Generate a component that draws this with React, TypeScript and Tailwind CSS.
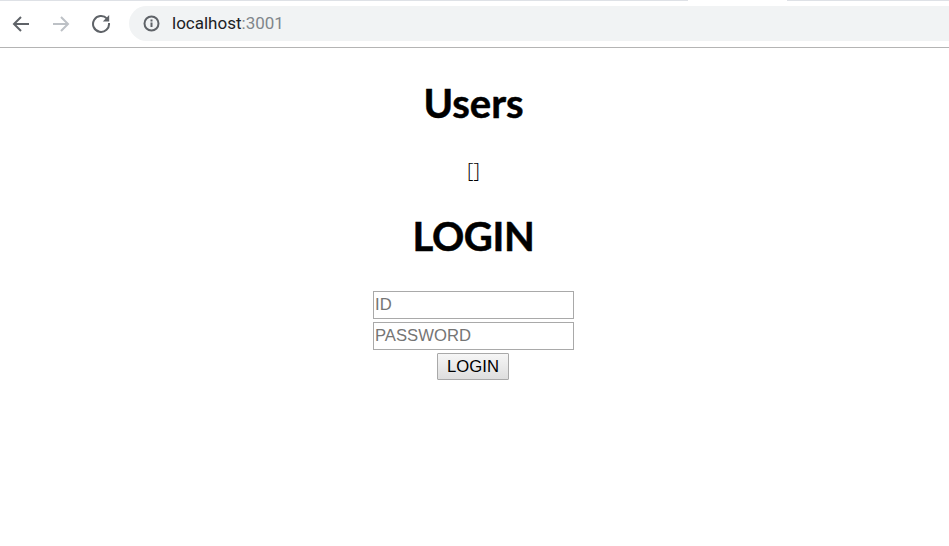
export default function App() {
  return (
    <div className="min-h-[546px] bg-white font-['Liberation_Sans',sans-serif] text-black">
      {/* Tab strip edge */}
      <div className="flex h-px">
        <div className="w-[688px] bg-[#dee1e6]" />
        <div className="w-[99px] bg-white" />
        <div className="flex-1 bg-[#dee1e6]" />
      </div>

      {/* Browser toolbar */}
      <div className="flex h-[47px] items-start border-b border-[#b4b4b4] pt-[5px]">
        <div className="flex h-[35px] w-[129px] items-center pl-[11px]">
          <svg className="h-[20px] w-[20px]" viewBox="0 0 20 20" fill="none" stroke="#5f6368" strokeWidth="2">
            <path d="M18 10H3M10 3l-7 7 7 7" />
          </svg>
          <svg className="ml-[20px] h-[20px] w-[20px]" viewBox="0 0 20 20" fill="none" stroke="#bdc1c6" strokeWidth="2">
            <path d="M2 10h15M10 3l7 7-7 7" />
          </svg>
          <svg className="ml-[20px] mb-[1px] h-[20px] w-[20px]" viewBox="0 0 20 20" fill="none" stroke="#5f6368" strokeWidth="2">
            <path d="M16 5.6A8 8 0 1 0 18 10" />
            <path d="M18.2 2v6.4h-6.4z" fill="#5f6368" stroke="none" />
          </svg>
        </div>
        <div className="flex h-[35px] flex-1 items-center rounded-l-full bg-[#f1f3f4] pl-[14px]">
          <svg className="h-[17px] w-[17px]" viewBox="0 0 17 17" fill="none">
            <circle cx="8.5" cy="8.5" r="7" stroke="#5f6368" strokeWidth="2" />
            <path d="M8.5 7.5v4.5M8.5 4.5v2" stroke="#5f6368" strokeWidth="2" />
          </svg>
          <span className="ml-[12px] font-['Roboto',sans-serif] text-[17px] text-[#202124]">
            localhost<span className="text-[#80868b]">:3001</span>
          </span>
        </div>
      </div>

      {/* Page */}
      <div className="flex flex-col items-center pr-[2px]">
        <h1 className="mt-[28px] font-['Lato',sans-serif] text-[40px] leading-[54px] font-bold [-webkit-text-stroke:0.5px_black]">Users</h1>
        <p className="mt-[27px] font-['Open_Sans',sans-serif] text-[20px] leading-[27px] font-light">[]</p>
        <h1 className="mt-[25px] font-['Lato',sans-serif] text-[40px] leading-[54px] font-bold tracking-[-0.4px] [-webkit-text-stroke:0.5px_black]">LOGIN</h1>
        <form className="mt-[28px] flex flex-col items-center">
          <input
            placeholder="ID"
            className="h-[28px] w-[201px] border border-[#a9a9a9] px-px text-[16.67px] placeholder:text-[#757575]"
          />
          <input
            placeholder="PASSWORD"
            className="mt-[3px] h-[28px] w-[201px] border border-[#a9a9a9] px-px text-[16.67px] placeholder:text-[#757575]"
          />
          <button
            type="button"
            className="mt-[3px] mr-[1px] h-[27px] w-[72px] rounded-[1px] border border-[#a9a9a9] bg-gradient-to-b from-[#f6f6f6] to-[#dedede] pt-[1px] text-[16.67px] leading-none"
          >
            LOGIN
          </button>
        </form>
      </div>
    </div>
  );
}
